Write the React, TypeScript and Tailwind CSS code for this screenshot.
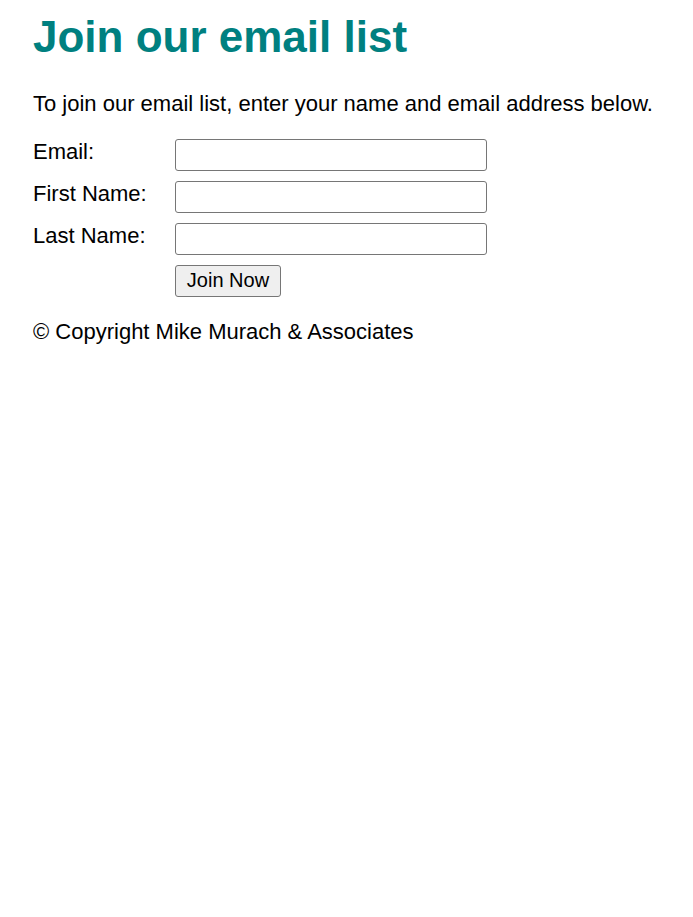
export default function App() {
  return (
    <div className="min-h-screen bg-white pl-[33px] font-['Liberation_Sans',Arial,sans-serif] text-black">
      <h1 className="pt-[12px] text-[44px] font-bold leading-[50px] text-[#008080]">Join our email list</h1>
      <p className="mt-[29px] text-[22px] leading-[25px]">
        To join our email list, enter your name and email address below.
      </p>
      <form className="mt-[23px] flex flex-col gap-[10px] text-[22px] leading-[25px]" onSubmit={e => e.preventDefault()}>
        <div className="flex items-start">
          <label className="w-[142px]">Email:</label>
          <input type="text" className="h-[32px] w-[312px] rounded-[3px] border border-[#767676] bg-white px-1" />
        </div>
        <div className="flex items-start">
          <label className="w-[142px]">First Name:</label>
          <input type="text" className="h-[32px] w-[312px] rounded-[3px] border border-[#767676] bg-white px-1" />
        </div>
        <div className="flex items-start">
          <label className="w-[142px]">Last Name:</label>
          <input type="text" className="h-[32px] w-[312px] rounded-[3px] border border-[#767676] bg-white px-1" />
        </div>
        <div className="flex pl-[142px]">
          <button
            type="submit"
            className="h-[32px] w-[106px] rounded-[3px] border border-[#767676] bg-[#efefef] pb-[2px] text-[20px] leading-[23px]"
          >
            Join Now
          </button>
        </div>
      </form>
      <p className="mt-[22px] text-[22px] leading-[25px]">© Copyright Mike Murach &amp; Associates</p>
    </div>
  )
}
